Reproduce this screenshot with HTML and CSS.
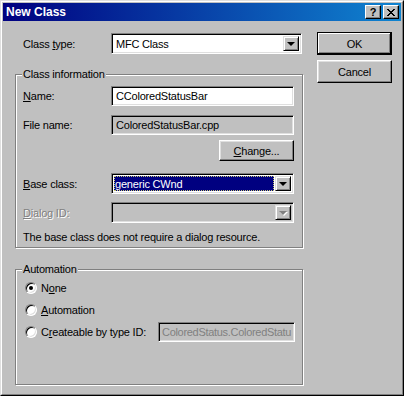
FILE: index.html
```html
<!DOCTYPE html>
<html lang="en">
<head>
    <meta charset="UTF-8">
    <title>New Class</title>
    <link rel="stylesheet" href="styles.css">
</head>
<body>
<div class="window">
  <div class="frame">
    <!-- Title bar -->
    <div class="titlebar">
        <span class="title">New Class</span>
        <div class="title-buttons">
            <span class="tbtn help">?</span>
            <span class="tbtn">
                <svg width="8" height="7" viewBox="0 0 8 7"><path d="M0 0h2v1h1v1h2v-1h1v-1h2v1h-1v1h-1v1h-1v1h1v1h1v1h1v1h-2v-1h-1v-1h-2v1h-1v1h-2v-1h1v-1h1v-1h1v-1h-1v-1h-1v-1h-1z" fill="#000"/></svg>
            </span>
        </div>
    </div>

    <div class="body">
        <div class="form">
            <div class="row row-type">
                <span class="label">Class <u>t</u>ype:</span>
                <div class="field combo wide">
                    <span class="combo-text">MFC Class</span>
                    <span class="drop"><i class="arrow"></i></span>
                </div>
            </div>

            <!-- Class information -->
            <div class="group group-info">
                <span class="legend">Class information</span>
                <div class="row">
                    <span class="label"><u>N</u>ame:</span>
                    <div class="field edit"><span class="combo-text">CColoredStatusBar</span></div>
                </div>
                <div class="row row-file">
                    <span class="label">File name:</span>
                    <div class="field edit readonly"><span class="combo-text">ColoredStatusBar.cpp</span></div>
                </div>
                <div class="row row-change">
                    <button class="btn"><u>C</u>hange...</button>
                </div>
                <div class="row row-base">
                    <span class="label"><u>B</u>ase class:</span>
                    <div class="field combo">
                        <span class="combo-text selected">generic CWnd</span>
                        <span class="drop"><i class="arrow"></i></span>
                    </div>
                </div>
                <div class="row row-dialog">
                    <span class="label disabled"><u>D</u>ialog ID:</span>
                    <div class="field combo readonly">
                        <span class="combo-text"></span>
                        <span class="drop"><i class="arrow off"></i></span>
                    </div>
                </div>
                <p class="note">The base class does not require a dialog resource.</p>
            </div>

            <!-- Automation -->
            <div class="group group-auto">
                <span class="legend">Automation</span>
                <div class="radio-row">
                    <span class="radio checked"></span>
                    <span class="radio-label">N<u>o</u>ne</span>
                </div>
                <div class="radio-row">
                    <span class="radio"></span>
                    <span class="radio-label"><u>A</u>utomation</span>
                </div>
                <div class="radio-row">
                    <div class="radio-wrap">
                        <span class="radio"></span>
                        <span class="radio-label">C<u>r</u>eateable by type ID:</span>
                    </div>
                    <div class="field edit readonly type-id"><span class="combo-text grey">ColoredStatus.ColoredStatu</span></div>
                </div>
            </div>
        </div>

        <div class="buttons">
            <button class="btn default">OK</button>
            <button class="btn">Cancel</button>
        </div>
    </div>
  </div>
</div>
</body>
</html>
```

FILE: styles.css
```css
* {
    box-sizing: border-box;
}
body {
    margin: 0;
    font-family: "Liberation Sans", Arial, sans-serif;
    font-size: 11px;
    letter-spacing: -0.2px;
    color: #000;
    background: #c0c0c0;
}
.window {
    width: 404px;
    height: 396px;
    border: 1px solid;
    border-color: #dfdfdf #000 #000 #dfdfdf;
    background: #c0c0c0;
}
.frame {
    height: 100%;
    border: 1px solid;
    border-color: #fff #808080 #808080 #fff;
    padding: 1px;
}
.titlebar {
    height: 18px;
    display: flex;
    align-items: center;
    justify-content: space-between;
    padding: 0 2px 0 3px;
    background: linear-gradient(to right, #000080, #1084d0);
}
.title {
    color: #fff;
    font-weight: bold;
    font-size: 12px;
    letter-spacing: 0;
}
.title-buttons {
    display: flex;
    gap: 2px;
}
.tbtn {
    width: 16px;
    height: 14px;
    display: flex;
    align-items: center;
    justify-content: center;
    background: #c0c0c0;
    border: 1px solid;
    border-color: #fff #000 #000 #fff;
    box-shadow: inset -1px -1px #808080;
    font-weight: bold;
    font-size: 11px;
    line-height: 1;
}
.body {
    display: flex;
    padding: 11px 0 0 12px;
}
.form {
    width: 288px;
    padding-top: 1px;
}
.row {
    display: flex;
    align-items: center;
    height: 20px;
}
.row-type {
    height: 21px;
    padding-left: 8px;
}
.label {
    width: 88px;
}
.label.disabled {
    color: #808080;
    text-shadow: 1px 1px #fff;
}
.field {
    height: 20px;
    width: 183px;
    display: flex;
    align-items: center;
    background: #fff;
    border: 1px solid;
    border-color: #808080 #fff #fff #808080;
    box-shadow: inset 1px 1px #000, inset -1px -1px #dfdfdf;
    padding: 2px;
}
.field.combo {
    height: 21px;
}
.field.wide {
    width: 191px;
}
.field.readonly {
    background: #c0c0c0;
}
.combo-text {
    flex: 1;
    height: 100%;
    display: flex;
    align-items: center;
    padding-left: 2px;
    white-space: nowrap;
    overflow: hidden;
}
.combo-text.selected {
    background: #000080;
    color: #fff;
    margin-right: 1px;
    outline: 1px dotted #c8c870;
    outline-offset: -1px;
    padding-left: 1px;
}
.combo-text.grey {
    color: #808080;
    padding-left: 1px;
    letter-spacing: -0.3px;
}
.drop {
    width: 16px;
    height: 100%;
    display: flex;
    align-items: center;
    justify-content: center;
    background: #c0c0c0;
    border: 1px solid;
    border-color: #dfdfdf #000 #000 #dfdfdf;
    box-shadow: inset 1px 1px #fff, inset -1px -1px #808080;
}
.arrow {
    width: 0;
    height: 0;
    border-left: 4px solid transparent;
    border-right: 4px solid transparent;
    border-top: 4px solid #000;
    margin-top: 1px;
}
.arrow.off {
    border-top-color: #808080;
    filter: drop-shadow(1px 1px 0 #fff);
}
.group {
    position: relative;
    width: 288px;
    border: 1px solid #808080;
    box-shadow: inset 1px 1px #fff, 1px 1px #fff;
}
.legend {
    position: absolute;
    top: -8px;
    left: 6px;
    padding: 0 1px;
    background: #c0c0c0;
    line-height: 14px;
}
.group-info {
    margin-top: 20px;
    height: 174px;
    padding: 11px 0 0 7px;
}
.row-file {
    margin-top: 9px;
}
.row-change {
    margin-top: 5px;
    width: 271px;
    height: 21px;
    justify-content: flex-end;
}
.row-base {
    margin-top: 12px;
    height: 21px;
}
.row-dialog {
    margin-top: 8px;
    height: 21px;
}
.note {
    margin: 8px 0 0;
    line-height: 13px;
}
.btn {
    width: 75px;
    height: 23px;
    padding: 0;
    font-family: inherit;
    font-size: 11px;
    letter-spacing: inherit;
    color: #000;
    background: #c0c0c0;
    border: 1px solid;
    border-color: #fff #000 #000 #fff;
    box-shadow: inset -1px -1px #808080, inset 1px 1px #dfdfdf;
}
.row-change .btn {
    height: 21px;
}
.btn.default {
    border-color: #000;
    box-shadow: inset -1px -1px #000, inset 1px 1px #fff, inset -2px -2px #808080;
}
.buttons {
    display: flex;
    flex-direction: column;
    gap: 5px;
    margin-left: 14px;
}
.group-auto {
    margin-top: 21px;
    height: 116px;
    padding: 8px 0 0 9px;
}
.radio-row {
    display: flex;
    align-items: center;
    height: 20px;
    margin-bottom: 2px;
}
.radio-wrap {
    display: flex;
    align-items: center;
    width: 133px;
}
.radio {
    position: relative;
    width: 12px;
    height: 12px;
    border-radius: 50%;
    background: #fff;
    border: 1px solid;
    border-color: #808080 #fff #fff #808080;
    box-shadow: inset 1px 1px #000, inset -1px -1px #dfdfdf;
    margin-right: 4px;
}
.radio.checked::after {
    content: "";
    position: absolute;
    left: 3px;
    top: 3px;
    width: 4px;
    height: 4px;
    border-radius: 50%;
    background: #000;
}
.type-id {
    width: 137px;
}
```
